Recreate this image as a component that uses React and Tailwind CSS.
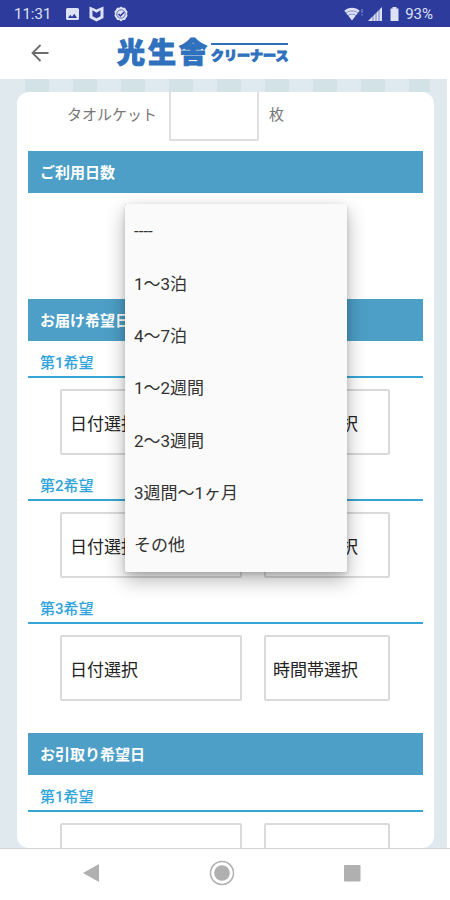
const STAY_OPTIONS = ["----", "1〜3泊", "4〜7泊", "1〜2週間", "2〜3週間", "3週間〜1ヶ月", "その他"];

function StatusBar() {
  return (
    <div className="flex h-[27px] shrink-0 items-center justify-between bg-[#2d3b9c] pt-px pr-[17px] pl-[14px] text-[15px] text-[#dde1f5]">
      <div className="flex items-center">
        <span>11:31</span>
        <svg className="ml-[14px]" width="15" height="15" viewBox="0 0 15 15">
          <path d="M2.5 1h10a1.5 1.5 0 0 1 1.500 1.500v9a1.500 1.500 0 0 1-1.500 1.500h-10a1.500 1.500 0 0 1-1.500-1.500v-9A1.500 1.500 0 0 1 2.500 1z" fill="currentColor" />
          <path d="M3 11l2.200-3.200 1.800 2 2.300-3L12 11z" fill="#2d3b9c" />
        </svg>
        <svg className="ml-[9px]" width="15" height="16" viewBox="0 0 15 16">
          <path d="M0.500 0.500L7.500 3.500L14.500 0.500V12L7.500 15.500L0.500 12z" fill="currentColor" />
          <path d="M3.500 4.300L7.500 6.800L11.500 4.300V10.200L7.500 12.200L3.500 10.200z" fill="#2d3b9c" />
        </svg>
        <svg className="ml-[10px]" width="14" height="16" viewBox="0 0 14 16">
          <path d="M7 0.500l1.800 1.200 2.200.1 1 2 1.500 1.700-.4 2.300.4 2.300-1.500 1.800-1 2-2.200.2L7 15.500l-1.800-1.400-2.200-.2-1-2-1.500-1.800.4-2.300L.5 5.500 2 3.800l1-2 2.200-.1z" fill="currentColor" />
          <circle cx="7" cy="8" r="4.200" fill="none" stroke="#2d3b9c" strokeWidth="0.700" />
          <path d="M4.500 8l1.900 1.900L10 6.300" fill="none" stroke="#2d3b9c" strokeWidth="1.500" />
        </svg>
      </div>
      <div className="flex items-center">
        <svg width="20" height="14" viewBox="0 0 20 14">
          <path d="M0.300 3.800C4.500-.4 11.500-.4 15.700 3.800L8 13.500z" fill="currentColor" />
          <path d="M2 6c3.500-2.800 8.500-2.800 12 0M4 8.500c2.500-1.800 5.500-1.800 8 0" stroke="#2d3b9c" strokeWidth="0.500" fill="none" />
          <path d="M18 2v4M18 7v1.500" stroke="currentColor" strokeWidth="1" opacity="0.600" />
        </svg>
        <svg className="ml-1" width="14" height="14" viewBox="0 0 14 14">
          <path d="M14 0v14H0z" fill="currentColor" />
          <path d="M5 7v7M8 4v10M11 2v12" stroke="#2d3b9c" strokeWidth="0.600" />
        </svg>
        <svg className="ml-2" width="9" height="14" viewBox="0 0 9 14">
          <path d="M2.500 0h4v1.500H8.500V14H.5V1.500h2z" fill="currentColor" />
        </svg>
        <span className="ml-[6px]">93%</span>
      </div>
    </div>
  );
}

function AppHeader() {
  return (
    <header className="flex h-[52px] shrink-0 items-center bg-white pl-7">
      <button type="button" aria-label="戻る" className="flex size-6 items-center justify-center text-[#6d6d6d]">
        <svg width="18" height="18" viewBox="0 0 18 18" fill="none" stroke="currentColor" strokeWidth="1.800">
          <path d="M17.500 9H2M9.500 1L1.500 9l8 8" />
        </svg>
      </button>
      <h1 className="ml-[65px] flex items-center font-black text-[#3071bd]">
        <span className="flex gap-[3px] pt-[2px] text-[28px] leading-6 [-webkit-text-stroke:1px_#3071bd]">
          <span>光</span>
          <span>生</span>
          <span>舎</span>
        </span>
        <span className="ml-1 border-t-2 border-[#3071bd] pt-1 text-[13px] leading-[14px] [-webkit-text-stroke:1px_#3071bd]">クリーナース</span>
      </h1>
    </header>
  );
}

function SectionBand({ children }) {
  return <h2 className="flex h-[42px] items-center bg-[#4d9fc7] px-3 pt-[2px] text-[15px] font-bold text-white">{children}</h2>;
}

function Wish({ label, id }) {
  return (
    <fieldset className="min-w-0">
      <legend className="w-full border-b-2 border-[#38a4d4] px-3 pt-[10px] pb-px text-[15px] leading-6 font-medium text-[#2fa4dc]">
        {label}
      </legend>
      <div className="mt-[11px] flex gap-[22px] pr-[33px] pl-8">
        <input
          type="text"
          aria-label={label + " 日付"}
          id={id + "-date"}
          placeholder="日付選択"
          className="h-[66px] w-0 grow rounded-xs border-2 border-[#dadada] bg-white px-2 pt-[3px] text-[17px] text-[#222] placeholder:text-[#222]"
        />
        <select
          aria-label={label + " 時間帯"}
          id={id + "-time"}
          className="h-[66px] w-[126px] shrink-0 appearance-none rounded-xs border-2 border-[#dadada] bg-white px-[7px] pt-[5px] text-[17px] text-[#222]"
        >
          <option>時間帯選択</option>
        </select>
      </div>
    </fieldset>
  );
}

function StayMenu() {
  return (
    <ul
      role="listbox"
      aria-label="ご利用日数"
      className="absolute top-0 left-0 z-10 flex h-[368px] w-[222px] flex-col rounded-xs bg-[#fafafa] pt-[2px] text-[17px] text-[#333] shadow-[0_8px_20px_rgba(0,0,0,0.300),0_2px_5px_rgba(0,0,0,0.150)]"
    >
      {STAY_OPTIONS.map((option) => (
        <li key={option} role="option" aria-selected={option === "----"} className="flex flex-1 items-center px-[9px]">
          {option}
        </li>
      ))}
    </ul>
  );
}

function OrderForm() {
  return (
    <form className="h-full overflow-hidden rounded-xl bg-white px-[11px]">
      <div className="flex h-[59px] pl-[39px] text-[#777]">
        <label htmlFor="towelket" className="w-[102px] pt-[11px] text-[15px] leading-6">
          タオルケット
        </label>
        <input id="towelket" type="text" className="h-[49px] w-[90px] rounded-b-xs border-2 border-t-0 border-[#e0e0e0]" />
        <span className="pt-[11px] pl-[10px] text-[15px] leading-6">枚</span>
      </div>

      <SectionBand>ご利用日数</SectionBand>
      <div className="h-[106px] pt-[11px] pl-[97px]">
        <div className="relative">
          <select aria-label="ご利用日数" className="h-[66px] w-[180px] appearance-none border-2 border-[#dadada] px-2 text-[17px]">
            <option>----</option>
          </select>
          <StayMenu />
        </div>
      </div>

      <SectionBand>お届け希望日</SectionBand>
      <div className="flex flex-col gap-[9px]">
        <Wish label="第1希望" id="delivery-1" />
        <Wish label="第2希望" id="delivery-2" />
        <Wish label="第3希望" id="delivery-3" />
      </div>

      <div className="mt-8">
        <SectionBand>お引取り希望日</SectionBand>
        <Wish label="第1希望" id="pickup-1" />
      </div>
    </form>
  );
}

function NavBar() {
  return (
    <nav className="flex h-[52px] shrink-0 items-center justify-between border-t border-[#d0d4d6] bg-white pr-[86px] pb-[3px] pl-[79px] text-[#b0b0b0]">
      <button type="button" aria-label="前へ">
        <svg width="24" height="24" viewBox="0 0 24 24">
          <path d="M20 3v18L4 12z" fill="currentColor" />
        </svg>
      </button>
      <button type="button" aria-label="ホーム">
        <svg width="26" height="26" viewBox="0 0 26 26">
          <circle cx="13" cy="13" r="11.500" fill="none" stroke="currentColor" strokeWidth="1.500" />
          <circle cx="13" cy="13" r="7.800" fill="currentColor" />
        </svg>
      </button>
      <button type="button" aria-label="アプリ履歴">
        <svg width="24" height="24" viewBox="0 0 24 24">
          <rect x="4" y="4" width="16.500" height="16.500" rx="1" fill="currentColor" />
        </svg>
      </button>
    </nav>
  );
}

export default function App() {
  return (
    <div className="flex h-screen flex-col overflow-hidden bg-white font-[Roboto,'Noto_Sans_CJK_JP',sans-serif]">
      <StatusBar />
      <AppHeader />
      <main className="mr-[3px] flex min-h-0 flex-1 flex-col bg-[#e0e9ee] pr-[13px] pl-[17px]">
        <div className="mr-1 ml-2 h-[13px] shrink-0 bg-[repeating-linear-gradient(90deg,#d3e2e6_0_24px,#dfe9f0_24px_48px)]" />
        <div className="min-h-0 flex-1">
          <OrderForm />
        </div>
      </main>
      <NavBar />
    </div>
  );
}
